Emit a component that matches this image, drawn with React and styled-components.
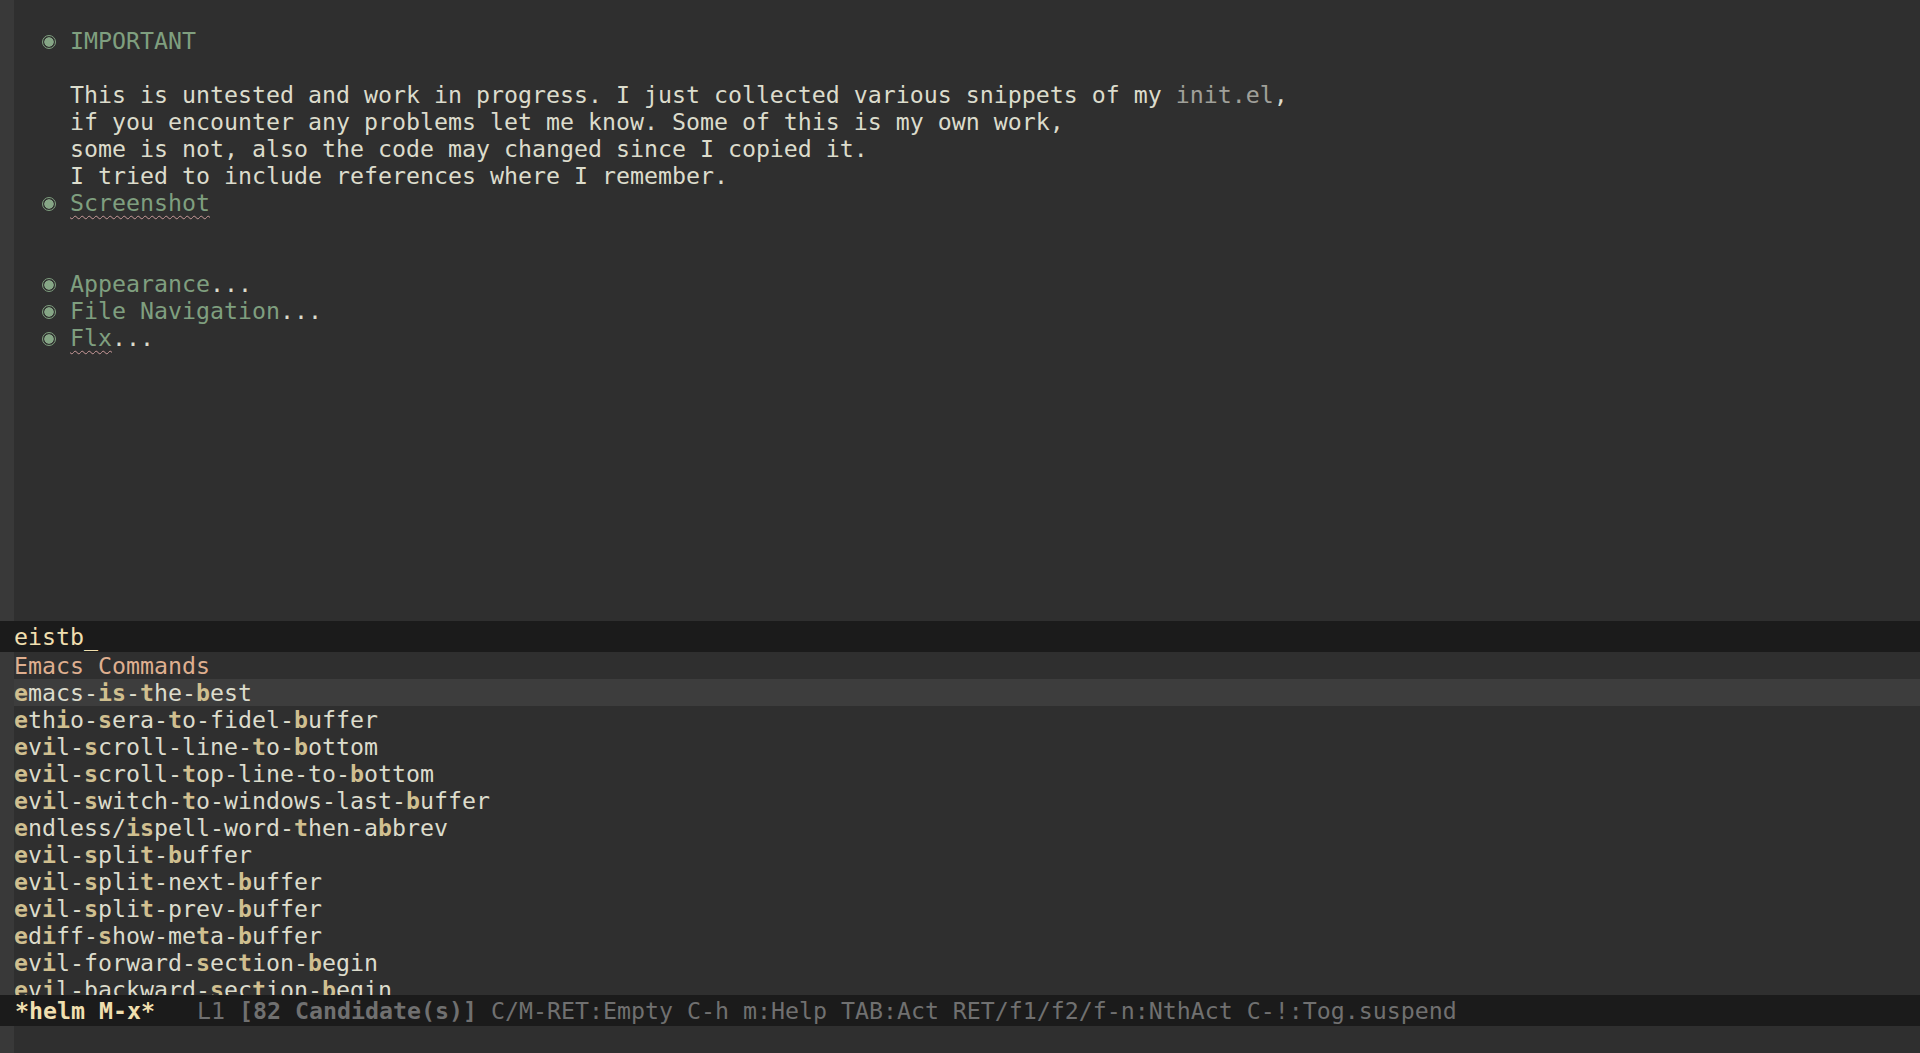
import React from "react";
import styled, { createGlobalStyle } from "styled-components";

const Global = createGlobalStyle`
  html, body { margin: 0; padding: 0; background: #2f2f2f; }
  body { overflow: hidden; }
  #root { width: 1920px; height: 1053px; }
`;

const Frame = styled.div`
  width: 1920px;
  height: 1053px;
  display: flex;
  flex-direction: column;
  background: #2f2f2f;
  font-family: "DejaVu Sans Mono", "Liberation Mono", monospace;
  font-size: 23.25px;
  line-height: 27px;
  color: #dcdccc;
  overflow: hidden;
`;

const Window = styled.div`
  display: flex;
  flex-direction: row;
  height: ${(p) => p.$h}px;
  flex: none;
  overflow: hidden;
`;

const Fringe = styled.div`
  width: 14px;
  flex: none;
  background: #393939;
`;

const Buffer = styled.div`
  flex: 1;
  display: flex;
  flex-direction: column;
  overflow: hidden;
`;

const Line = styled.div`
  height: 27px;
  white-space: pre;
  flex: none;
  background: ${(p) => (p.$selected ? "#3d3d3d" : "transparent")};
`;

const Heading = styled.span`
  color: #7f9f7f;
  text-decoration: ${(p) => (p.$squiggle ? "underline wavy #c99a9a" : "none")};
  text-decoration-thickness: 1px;
  text-underline-offset: 4px;
`;

const Bullet = styled.span`
  display: inline-block;
  width: 14px;
  height: 27px;
  vertical-align: top;
  position: relative;
  &::after {
    content: "";
    position: absolute;
    left: 0px;
    top: 8px;
    width: 12px;
    height: 12px;
    border-radius: 50%;
    border: 1px solid #7f9f7f;
    background: radial-gradient(circle at center, #86a686 0 4.4px, transparent 5px);
  }
`;

const Dim = styled.span`
  color: #a0a09a;
`;

const HeaderBar = styled.div`
  flex: none;
  height: 31px;
  padding: 2px 0 2px 14px;
  box-sizing: border-box;
  background: #1b1b1b;
  color: #f0dfaf;
  white-space: pre;
`;

const SourceTitle = styled(Line)`
  color: #dfaf8f;
`;

const Match = styled.span`
  color: #d0bf8f;
  font-weight: bold;
`;

const ModeLine = styled.div`
  flex: none;
  height: 31px;
  padding: 2px 0 2px 15px;
  box-sizing: border-box;
  background: #1b1b1b;
  color: #707070;
  white-space: pre;
`;

const ModeName = styled.span`
  color: #f0dfaf;
  font-weight: bold;
`;

const Strong = styled.span`
  font-weight: bold;
`;

const candidates = [
  "[e]macs-[is]-[t]he-[b]est",
  "[e]th[i]o-[s]era-[t]o-fidel-[b]uffer",
  "[e]v[i]l-[s]croll-line-[t]o-[b]ottom",
  "[e]v[i]l-[s]croll-[t]op-line-to-[b]ottom",
  "[e]v[i]l-[s]witch-[t]o-windows-last-[b]uffer",
  "[e]ndless/[is]pell-word-[t]hen-a[b]brev",
  "[e]v[i]l-[s]pli[t]-[b]uffer",
  "[e]v[i]l-[s]pli[t]-next-[b]uffer",
  "[e]v[i]l-[s]pli[t]-prev-[b]uffer",
  "[e]d[i]ff-[s]how-me[t]a-[b]uffer",
  "[e]v[i]l-forward-[s]ec[t]ion-[b]egin",
  "[e]v[i]l-backward-[s]ec[t]ion-[b]egin",
];

function renderCandidate(str) {
  return str.split(/(\[[^\]]+\])/).filter(Boolean).map((part, i) =>
    part.startsWith("[") ? (
      <Match key={i}>{part.slice(1, -1)}</Match>
    ) : (
      <span key={i}>{part}</span>
    )
  );
}

function HeadingLine({ title, squiggle, ellipsis }) {
  return (
    <Line>
      {"  "}
      <Bullet />
      {" "}
      <Heading $squiggle={squiggle}>{title}</Heading>
      {ellipsis ? "..." : ""}
    </Line>
  );
}

export default function App() {
  return (
    <Frame>
      <Global />
      <Window $h={621}>
        <Fringe />
        <Buffer>
          <Line />
          <HeadingLine title="IMPORTANT" />
          <Line />
          <Line>
            {"    This is untested and work in progress. I just collected various snippets of my "}
            <Dim>init.el</Dim>,
          </Line>
          <Line>{"    if you encounter any problems let me know. Some of this is my own work,"}</Line>
          <Line>{"    some is not, also the code may changed since I copied it."}</Line>
          <Line>{"    I tried to include references where I remember."}</Line>
          <HeadingLine title="Screenshot" squiggle />
          <Line />
          <Line />
          <HeadingLine title="Appearance" ellipsis />
          <HeadingLine title="File Navigation" ellipsis />
          <HeadingLine title="Flx" squiggle ellipsis />
        </Buffer>
      </Window>
      <HeaderBar>eistb_</HeaderBar>
      <Window $h={343}>
        <Fringe />
        <Buffer>
          <SourceTitle>Emacs Commands</SourceTitle>
          {candidates.map((c, i) => (
            <Line key={i} $selected={i === 0}>
              {renderCandidate(c)}
            </Line>
          ))}
        </Buffer>
      </Window>
      <ModeLine>
        <ModeName>*helm M-x*</ModeName>
        {"   L1 "}
        <Strong>[82 Candidate(s)]</Strong>
        {" C/M-RET:Empty C-h m:Help TAB:Act RET/f1/f2/f-n:NthAct C-!:Tog.suspend"}
      </ModeLine>
      <Window $h={27}>
        <Fringe />
        <Buffer />
      </Window>
    </Frame>
  );
}
